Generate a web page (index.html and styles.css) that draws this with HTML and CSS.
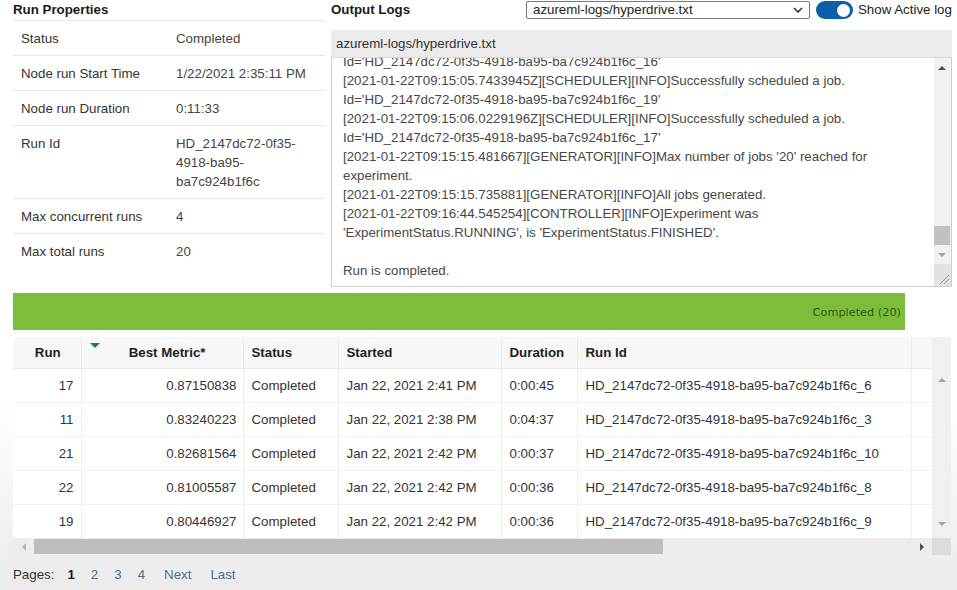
FILE: index.html
```html
<!DOCTYPE html>
<html>
<head>
<meta charset="utf-8">
<title>Run</title>
<link rel="stylesheet" href="styles.css">
</head>
<body>
<div class="page">
  <div class="top">
    <section class="props">
      <h2 class="title">Run Properties</h2>
      <div class="prop-row"><div class="k">Status</div><div class="v">Completed</div></div>
      <div class="prop-row"><div class="k">Node run Start Time</div><div class="v">1/22/2021 2:35:11 PM</div></div>
      <div class="prop-row"><div class="k">Node run Duration</div><div class="v">0:11:33</div></div>
      <div class="prop-row"><div class="k">Run Id</div><div class="v">HD_2147dc72-0f35-<br>4918-ba95-<br>ba7c924b1f6c</div></div>
      <div class="prop-row"><div class="k">Max concurrent runs</div><div class="v">4</div></div>
      <div class="prop-row last"><div class="k">Max total runs</div><div class="v">20</div></div>
    </section>
    <section class="logs">
      <div class="logs-head">
        <h2 class="title logs-title">Output Logs</h2>
        <div class="select">
          <span>azureml-logs/hyperdrive.txt</span>
          <svg class="chev" width="10" height="6" viewBox="0 0 10 6"><polyline points="1,1 5,5 9,1" fill="none" stroke="#333" stroke-width="1.6"/></svg>
        </div>
        <div class="toggle"><span class="knob"></span></div>
        <span class="toggle-label">Show Active log</span>
      </div>
      <div class="log-file">azureml-logs/hyperdrive.txt</div>
      <div class="log-box">
        <div class="log-view">
          <div class="log-text">
            <div>Id='HD_2147dc72-0f35-4918-ba95-ba7c924b1f6c_16'</div>
            <div>[2021-01-22T09:15:05.7433945Z][SCHEDULER][INFO]Successfully scheduled a job.</div>
            <div>Id='HD_2147dc72-0f35-4918-ba95-ba7c924b1f6c_19'</div>
            <div>[2021-01-22T09:15:06.0229196Z][SCHEDULER][INFO]Successfully scheduled a job.</div>
            <div>Id='HD_2147dc72-0f35-4918-ba95-ba7c924b1f6c_17'</div>
            <div>[2021-01-22T09:15:15.481667][GENERATOR][INFO]Max number of jobs '20' reached for<br>experiment.</div>
            <div>[2021-01-22T09:15:15.735881][GENERATOR][INFO]All jobs generated.</div>
            <div>[2021-01-22T09:16:44.545254][CONTROLLER][INFO]Experiment was<br>'ExperimentStatus.RUNNING', is 'ExperimentStatus.FINISHED'.</div>
            <div>&nbsp;</div>
            <div>Run is completed.</div>
          </div>
        </div>
        <div class="log-scroll">
          <div class="sb-btn"><span class="tri-up dark"></span></div>
          <div class="sb-track"><div class="sb-thumb"></div></div>
          <div class="sb-btn down"><span class="tri-down light"></span></div>
          <div class="resizer">
            <svg width="17" height="22" viewBox="0 0 17 22"><line x1="6" y1="20" x2="15" y2="11" stroke="#9a9a9a" stroke-width="1"/><line x1="10" y1="20" x2="15" y2="15" stroke="#9a9a9a" stroke-width="1"/></svg>
          </div>
        </div>
      </div>
    </section>
  </div>

  <div class="progress"><span>Completed (20)</span></div>

  <div class="grid">
    <div class="grid-main">
      <table class="runs">
        <colgroup>
          <col class="c-run"><col class="c-metric"><col class="c-status"><col class="c-started"><col class="c-dur"><col class="c-id"><col class="c-pad">
        </colgroup>
        <thead>
          <tr>
            <th class="h-run">Run</th>
            <th class="h-metric"><span class="sort"></span>Best Metric*</th>
            <th>Status</th>
            <th>Started</th>
            <th>Duration</th>
            <th>Run Id</th>
            <th></th>
          </tr>
        </thead>
        <tbody>
          <tr><td class="num">17</td><td class="metric">0.87150838</td><td>Completed</td><td>Jan 22, 2021 2:41 PM</td><td>0:00:45</td><td>HD_2147dc72-0f35-4918-ba95-ba7c924b1f6c_6</td><td></td></tr>
          <tr><td class="num">11</td><td class="metric">0.83240223</td><td>Completed</td><td>Jan 22, 2021 2:38 PM</td><td>0:04:37</td><td>HD_2147dc72-0f35-4918-ba95-ba7c924b1f6c_3</td><td></td></tr>
          <tr><td class="num">21</td><td class="metric">0.82681564</td><td>Completed</td><td>Jan 22, 2021 2:42 PM</td><td>0:00:37</td><td>HD_2147dc72-0f35-4918-ba95-ba7c924b1f6c_10</td><td></td></tr>
          <tr><td class="num">22</td><td class="metric">0.81005587</td><td>Completed</td><td>Jan 22, 2021 2:42 PM</td><td>0:00:36</td><td>HD_2147dc72-0f35-4918-ba95-ba7c924b1f6c_8</td><td></td></tr>
          <tr><td class="num">19</td><td class="metric">0.80446927</td><td>Completed</td><td>Jan 22, 2021 2:42 PM</td><td>0:00:36</td><td>HD_2147dc72-0f35-4918-ba95-ba7c924b1f6c_9</td><td></td></tr>
        </tbody>
      </table>
      <div class="grid-vscroll">
        <div class="gv-head"></div>
        <div class="gv-body">
          <span class="tri-up light"></span>
          <span class="tri-down light"></span>
        </div>
      </div>
    </div>
    <div class="hscroll">
      <div class="hs-btn"><span class="tri-left light"></span></div>
      <div class="hs-track"><div class="hs-thumb"></div></div>
      <div class="hs-btn"><span class="tri-right dark"></span></div>
      <div class="hs-corner"></div>
    </div>
  </div>

  <div class="pager">
    <span class="pg-label">Pages:</span>
    <span class="pg cur">1</span>
    <span class="pg">2</span>
    <span class="pg">3</span>
    <span class="pg">4</span>
    <span class="pg nav">Next</span>
    <span class="pg nav">Last</span>
  </div>
</div>
</body>
</html>
```

FILE: styles.css
```css
html {
  background: linear-gradient(to bottom, #ffffff 0, #ffffff 400px, #ebebeb 590px);
  min-height: 100%;
}
body {
  margin: 0;
  font-family: "Liberation Sans", Arial, sans-serif;
  font-size: 13.3px;
  color: #333;
}
.page {
  width: 957px;
  height: 590px;
  padding: 0 6px 0 13px;
  box-sizing: border-box;
  overflow: hidden;
}
.top {
  display: flex;
  gap: 6px;
  height: 287px;
}
.title {
  margin: 0;
  font-size: 13.3px;
  font-weight: bold;
  color: #1a1a1a;
  line-height: 20px;
  height: 20px;
}

/* properties */
.props {
  width: 312px;
  flex: 0 0 312px;
}
.props .title {
  border-bottom: 1px solid #e6e6e6;
}
.prop-row {
  display: flex;
  padding: 8px 0 7px;
  line-height: 19px;
  border-bottom: 1px solid #e6e6e6;
}
.prop-row.last {
  border-bottom: none;
}
.prop-row .k {
  flex: 0 0 155px;
  padding-left: 8px;
  color: #333;
}
.prop-row .v {
  flex: 1;
  color: #444;
}

/* logs */
.logs {
  flex: 1;
  display: flex;
  flex-direction: column;
}
.logs-head {
  display: flex;
  align-items: flex-start;
  height: 20px;
}
.logs-title {
  flex: 0 0 195px;
}
.select {
  margin-top: 1px;
  width: 284px;
  height: 18px;
  box-sizing: border-box;
  border: 1px solid #7a7a7a;
  border-radius: 2px;
  display: flex;
  align-items: center;
  justify-content: space-between;
  padding: 0 6px 0 6px;
  color: #222;
  background: #fff;
  line-height: 16px;
}
.toggle {
  margin: 1px 0 0 6px;
  width: 37px;
  height: 18px;
  border-radius: 9px;
  background: #0d5eaa;
  display: flex;
  align-items: center;
  justify-content: flex-end;
  padding-right: 3px;
  box-sizing: border-box;
}
.knob {
  width: 13px;
  height: 13px;
  border-radius: 50%;
  background: #fff;
}
.toggle-label {
  margin-left: 5px;
  line-height: 20px;
  color: #222;
  white-space: nowrap;
}
.log-file {
  margin-top: 10px;
  height: 27px;
  line-height: 27px;
  background: #ebebeb;
  padding-left: 5px;
  color: #333;
}
.log-box {
  height: 230px;
  box-sizing: border-box;
  border: 1px solid #cfcfcf;
  border-top-color: #d8d8d8;
  display: flex;
  background: #fff;
}
.log-view {
  flex: 1;
  overflow: hidden;
  padding-left: 11px;
}
.log-text {
  margin-top: -6px;
  line-height: 19px;
  color: #474747;
  white-space: nowrap;
}
.log-scroll {
  flex: 0 0 17px;
  display: flex;
  flex-direction: column;
  background: #f1f1f1;
}
.sb-btn {
  height: 20px;
  display: flex;
  align-items: center;
  justify-content: center;
}
.sb-btn.down {
  height: 19px;
}
.sb-track {
  flex: 1;
  display: flex;
  flex-direction: column;
  justify-content: flex-end;
  align-items: center;
}
.sb-thumb {
  width: 16px;
  height: 19px;
  background: #c1c1c1;
}
.resizer {
  height: 22px;
  background: #e2e2e2;
}
.resizer svg {
  display: block;
}

/* triangles */
.tri-up, .tri-down, .tri-left, .tri-right {
  display: block;
  width: 0;
  height: 0;
}
.tri-up {
  border-left: 4px solid transparent;
  border-right: 4px solid transparent;
  border-bottom: 4px solid #505050;
}
.tri-down {
  border-left: 4px solid transparent;
  border-right: 4px solid transparent;
  border-top: 4px solid #505050;
}
.tri-left {
  border-top: 4px solid transparent;
  border-bottom: 4px solid transparent;
  border-right: 4px solid #505050;
}
.tri-right {
  border-top: 4px solid transparent;
  border-bottom: 4px solid transparent;
  border-left: 4px solid #505050;
}
.tri-up.light { border-bottom-color: #a3a3a3; }
.tri-down.light { border-top-color: #a3a3a3; }
.tri-left.light { border-right-color: #b5b5b5; }
.tri-right.dark { border-left-color: #505050; }

/* progress */
.progress {
  margin-top: 6px;
  width: 892px;
  height: 37px;
  background: #7cbd3b;
  display: flex;
  align-items: center;
  justify-content: flex-end;
  padding-right: 4px;
  box-sizing: border-box;
}
.progress span {
  font-family: "DejaVu Sans", "Liberation Sans", sans-serif;
  font-size: 11.3px;
  color: rgba(20, 40, 10, 0.72);
  padding-top: 2px;
}

/* grid */
.grid {
  margin-top: 7px;
  width: 938px;
}
.grid-main {
  display: flex;
}
.runs {
  border-collapse: collapse;
  table-layout: fixed;
  width: 919px;
  background: #fff;
}
.c-run { width: 68px; }
.c-metric { width: 162px; }
.c-status { width: 95px; }
.c-started { width: 163px; }
.c-dur { width: 76px; }
.c-id { width: 334px; }
.c-pad { width: 21px; }
.runs th {
  height: 31px;
  padding: 0 0 0 8px;
  text-align: left;
  font-weight: bold;
  color: #222;
  background: #f7f7f7;
  border-right: 1px solid #e9e9e9;
  white-space: nowrap;
  box-sizing: border-box;
}
.runs th.h-run {
  text-align: center;
  padding: 0 0 0 2px;
}
.runs th.h-metric {
  position: relative;
  text-align: right;
  padding: 0 37px 0 0;
}
.sort {
  position: absolute;
  left: 8px;
  top: 6px;
  width: 0;
  height: 0;
  border-left: 5px solid transparent;
  border-right: 5px solid transparent;
  border-top: 5px solid #1b7c6a;
}
.runs td {
  height: 34px;
  padding: 0 0 0 8px;
  color: #333;
  border-right: 1px solid #efefef;
  border-top: 1px solid #f2f2f2;
  white-space: nowrap;
  box-sizing: border-box;
}
.runs tr:first-child td {
  border-top: 1px solid #e9e9e9;
}
.runs td.num {
  text-align: right;
  padding: 0 7px 0 0;
}
.runs td.metric {
  text-align: right;
  padding: 0 6px 0 0;
}
.runs td:last-child, .runs th:last-child {
  border-right: none;
}
.grid-vscroll {
  flex: 0 0 19px;
  display: flex;
  flex-direction: column;
  background: #f0f0f0;
}
.gv-head {
  height: 31px;
}
.gv-body {
  flex: 1;
  display: flex;
  flex-direction: column;
  justify-content: space-between;
  align-items: center;
  padding: 10px 0 12px;
}
.hscroll {
  display: flex;
  height: 17px;
  background: #ededed;
}
.hs-btn {
  width: 21px;
  display: flex;
  align-items: center;
  justify-content: center;
}
.hs-track {
  flex: 1;
  display: flex;
  align-items: center;
}
.hs-thumb {
  width: 629px;
  height: 15px;
  background: #bdbdbd;
}
.hs-corner {
  width: 19px;
  background: #dcdcdc;
}

/* pager */
.pager {
  margin-top: 10px;
  display: flex;
  line-height: 20px;
  height: 20px;
}
.pg-label {
  color: #333;
  margin-right: 13px;
}
.pg {
  color: #4d6e8e;
  margin-right: 16px;
}
.pg.cur {
  color: #1a1a1a;
  font-weight: bold;
}
.pg.nav {
  margin-right: 19px;
  margin-left: 3px;
}
.pg.nav + .pg.nav {
  margin-left: 0;
}
```
